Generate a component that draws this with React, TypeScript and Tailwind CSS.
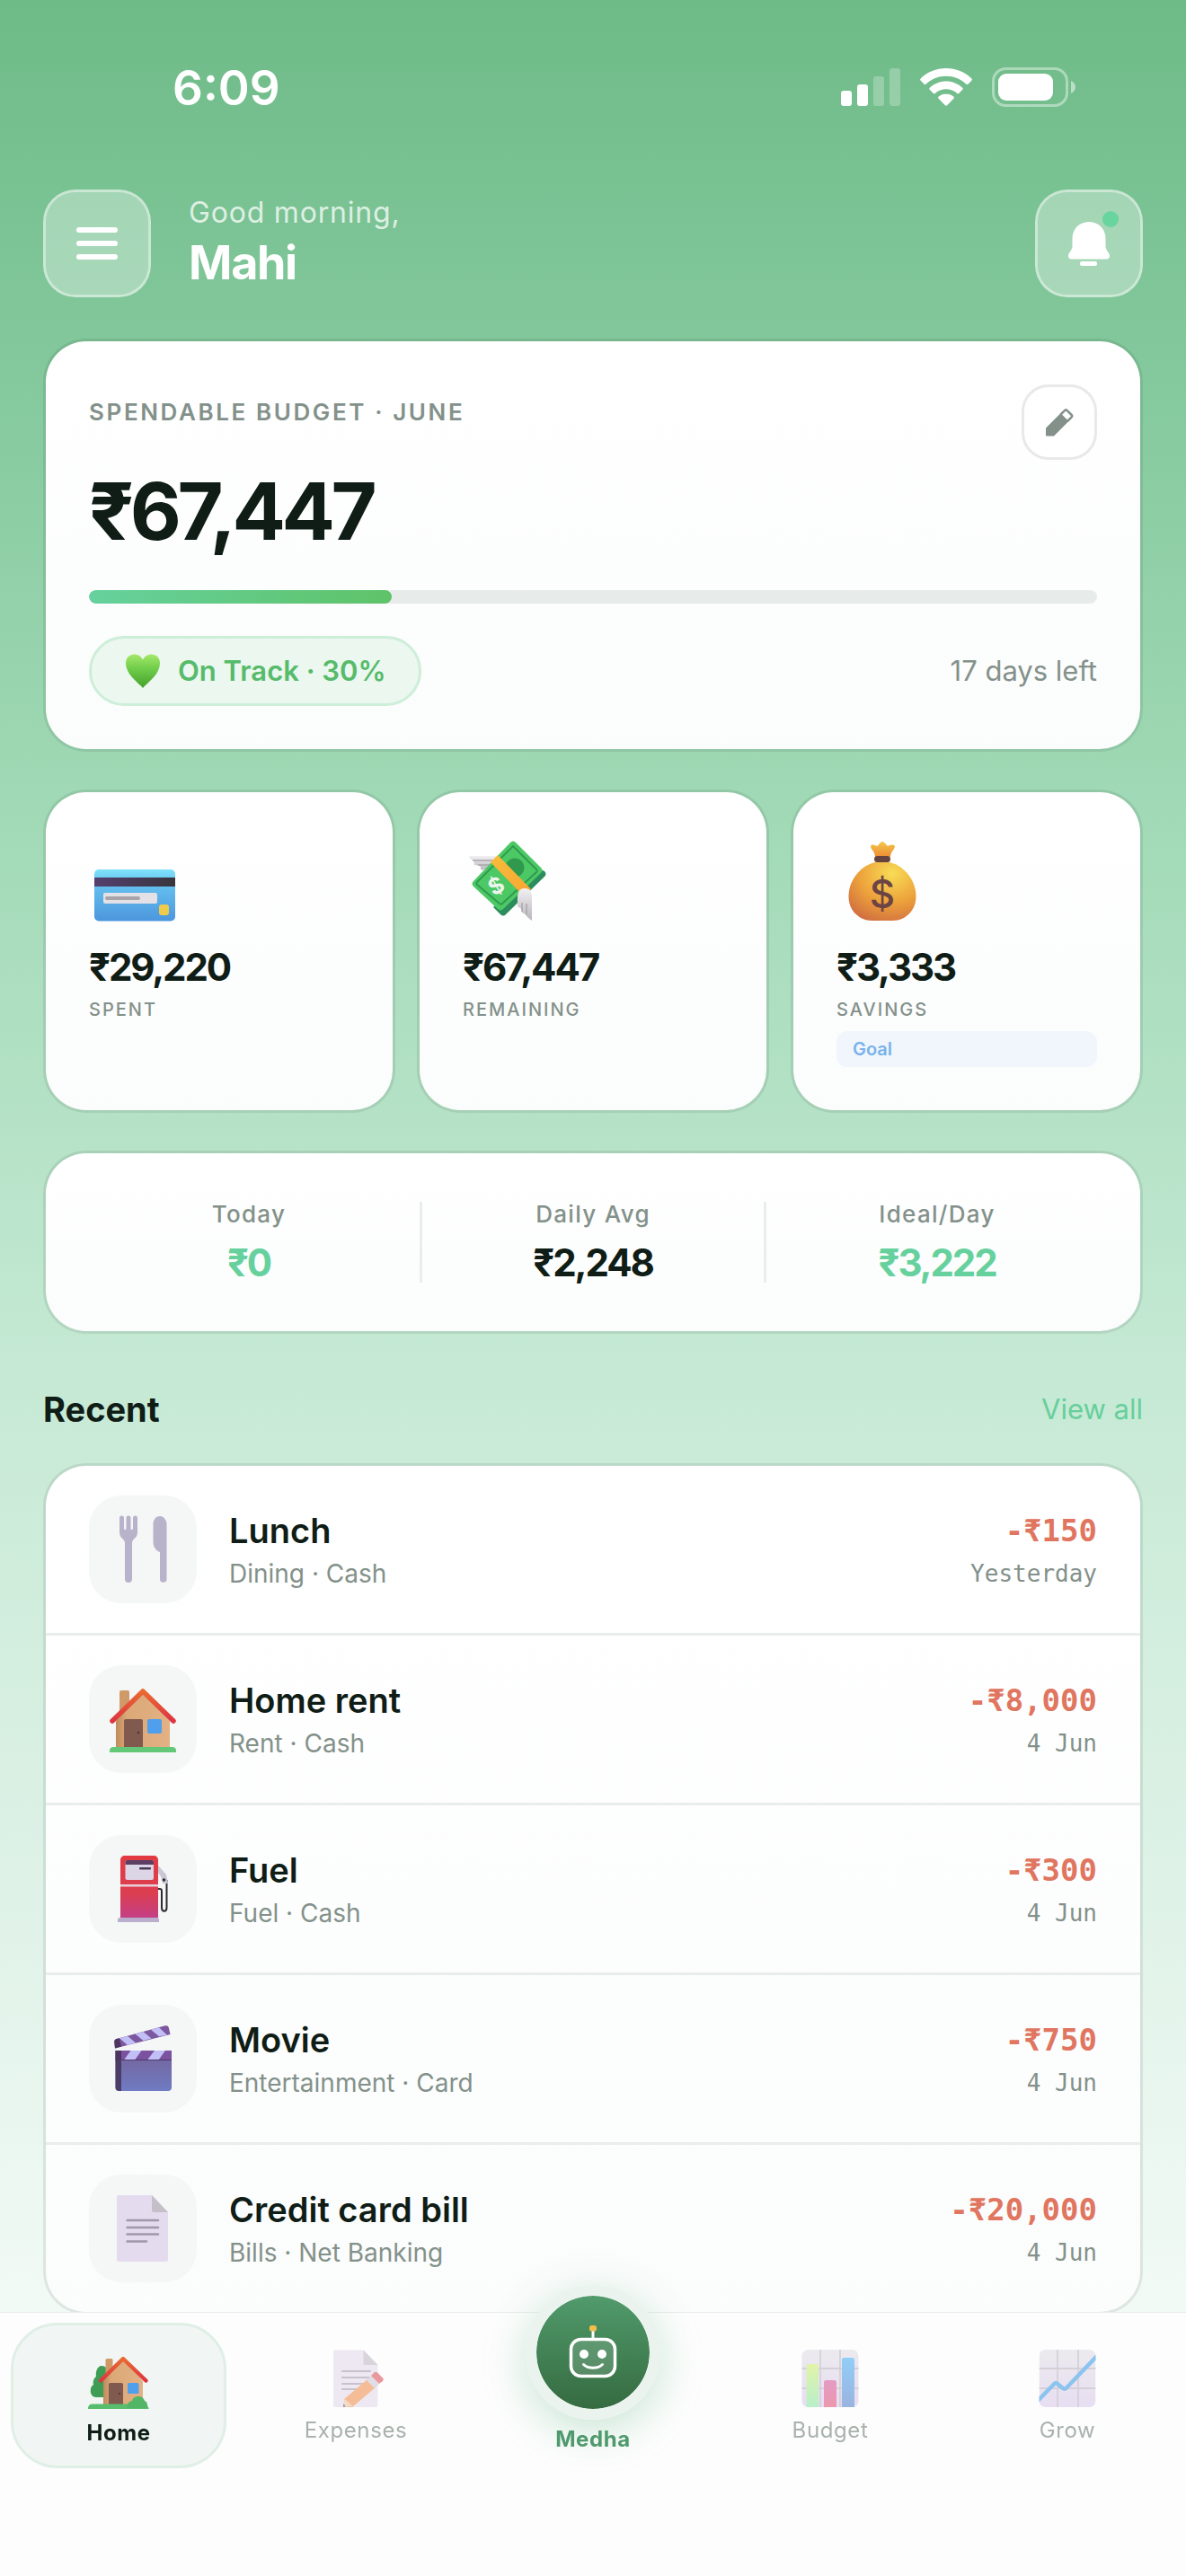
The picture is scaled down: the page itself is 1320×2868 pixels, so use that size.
import React from "react";

const CARD =
  "rounded-[48px] border-[3px] border-black/8 bg-clip-padding bg-linear-to-b from-white to-[#fbfcfc]";

function StatusBar() {
  return (
    <div className="flex items-start justify-between pt-[70px] pr-[122px] pl-[192px]">
      <span className="text-[53px] leading-[56px] font-semibold text-white">6:09</span>
      <div className="flex items-center gap-[22px] pt-[5px]">
        <svg width="66" height="42" viewBox="0 0 66 42" fill="#fff">
          <rect x="0" y="25" width="12" height="17" rx="3" />
          <rect x="18" y="18" width="12" height="24" rx="3" />
          <rect x="36" y="9" width="12" height="33" rx="3" opacity=".25" />
          <rect x="54" y="0" width="12" height="42" rx="3" opacity=".25" />
        </svg>
        <svg width="58" height="42" viewBox="0 0 58 42" fill="#fff">
          <path d="M29 0C18 0 8 4.300.8 11.200c-.9.9-.9 1.800-.1 2.600l3.600 3.600c.8.8 1.700.7 2.500 0C12.800 12 20.500 8.800 29 8.800s16.200 3.200 22.200 8.600c.8.700 1.700.8 2.500 0l3.600-3.600c.8-.8.8-1.700-.1-2.600C50 4.300 40 0 29 0z" />
          <path d="M29 14.500c-7 0-13.300 2.700-18 7-.9.800-.9 1.700-.1 2.500l3.700 3.700c.7.700 1.500.7 2.400 0 3.200-2.800 7.400-4.500 12-4.500s8.800 1.700 12 4.500c.9.700 1.700.7 2.400 0l3.700-3.700c.8-.8.8-1.700-.1-2.500-4.700-4.300-11-7-18-7z" />
          <path d="M29 28.500c-3.200 0-6 1.100-8.200 2.900-.9.700-.9 1.600-.2 2.400l7 7.200c.9.900 1.900.9 2.800 0l7-7.200c.7-.8.7-1.700-.2-2.400-2.200-1.800-5-2.900-8.200-2.900z" />
        </svg>
        <svg width="94" height="44" viewBox="0 0 94 44">
          <rect x="1.500" y="1.500" width="82" height="41" rx="14" fill="none" stroke="#fff" strokeOpacity=".42" strokeWidth="3" />
          <rect x="7" y="7" width="61" height="30" rx="9" fill="#fff" />
          <path d="M88 15c3 1.200 5 4 5 7s-2 5.800-5 7z" fill="#fff" fillOpacity=".5" />
        </svg>
      </div>
    </div>
  );
}

function Header() {
  return (
    <header className="flex items-center justify-between px-12 pt-[84px]">
      <div className="flex items-center gap-[42px]">
        <button
          aria-label="Menu"
          className="flex size-[120px] flex-col items-center justify-center gap-[9px] rounded-[36px] border-[3px] border-white/60 bg-white/32 bg-clip-padding"
        >
          <span className="h-1.5 w-[46px] rounded-full bg-white" />
          <span className="h-1.5 w-[46px] rounded-full bg-white" />
          <span className="h-1.5 w-[46px] rounded-full bg-white" />
        </button>
        <div className="pb-2.5">
          <p className="text-[32px] leading-[54px] tracking-wide text-white/75">Good morning,</p>
          <h1 className="text-[52px] leading-[57px] font-bold tracking-tight text-white">Mahi</h1>
        </div>
      </div>
      <button
        aria-label="Notifications"
        className="flex size-[120px] items-center justify-center rounded-[36px] border-[3px] border-white/60 bg-white/32 bg-clip-padding"
      >
        <svg width="120" height="120" viewBox="0 0 120 120" className="shrink-0">
          <path
            d="M60 36c-11 0-18.500 8-18.500 19v8c0 5-4.500 7-4.500 11 0 2 1 3.500 3.500 3.500h39c2.500 0 3.500-1.500 3.500-3.500 0-4-4.500-6-4.500-11v-8c0-11-7.500-19-18.500-19z"
            fill="#fff"
          />
          <rect x="50" y="80" width="19" height="5" rx="2" fill="#fff" />
          <circle cx="84" cy="33" r="9" fill="#68d49e" />
        </svg>
      </button>
    </header>
  );
}

function BudgetCard() {
  return (
    <section className={`${CARD} p-12`}>
      <div className="flex items-start justify-between">
        <h2 className="pt-3.5 text-[26px] leading-[34px] font-semibold tracking-widest text-[#83918a]">
          SPENDABLE BUDGET · JUNE
        </h2>
        <button
          aria-label="Edit budget"
          className="flex size-[84px] items-center justify-center rounded-[30px] border-[3px] border-[#e9e9e9] bg-white"
        >
          <svg width="32" height="32" viewBox="0 0 32 32">
            <path d="M2 30.500V23L17.500 7.500l7.500 7.500L9.500 30.500z" fill="#83918a" stroke="#83918a" strokeWidth="2" strokeLinejoin="round" />
            <path d="M17.500 7.500l4.700-4.700c.7-.7 1.600-.7 2.300 0l5.200 5.200c.7.700.7 1.600 0 2.300L25 15" fill="none" stroke="#83918a" strokeWidth="2.500" strokeLinejoin="round" />
          </svg>
        </button>
      </div>
      <p className="text-[88px] leading-[115px] font-bold tracking-tighter text-[#0f1d16]">₹67,447</p>
      <div
        role="progressbar"
        aria-label="Budget used"
        aria-valuenow={30}
        className="mt-[30px] h-[15px] overflow-hidden rounded-full bg-[#e7ebe9]"
      >
        <div className="h-full rounded-full bg-linear-to-r from-[#66d19d] to-[#5ec368]" style={{ width: "30%" }} />
      </div>
      <div className="mt-9 flex items-center justify-between">
        <span className="flex h-[78px] items-center gap-[18px] rounded-full border-[3px] border-[#cdeed8] bg-[#ebf7ef] px-9 text-[31px] font-semibold text-[#56bb6a]">
          <svg width="42" height="42" viewBox="0 0 42 42">
            <defs>
              <linearGradient id="heart" x1="0" y1="0" x2="0" y2="1">
                <stop offset="0" stopColor="#a5e86a" />
                <stop offset=".4" stopColor="#72cf4c" />
                <stop offset="1" stopColor="#46a02c" />
              </linearGradient>
            </defs>
            <path d="M21 40C16 34 2 25 2 12.500 2 6 6.500 2.500 11.500 2.500c4.200 0 7.600 2.300 9.500 6 1.900-3.700 5.300-6 9.500-6 5 0 9.500 3.500 9.500 10C40 25 26 34 21 40z" fill="url(#heart)" />
          </svg>
          On Track · 30%
        </span>
        <span className="text-[31px] text-[#83918a]">17 days left</span>
      </div>
    </section>
  );
}

function CreditCardIcon() {
  return (
    <svg width="96" height="108" viewBox="0 0 96 108">
      <defs>
        <linearGradient id="cc" x1="0" y1="0" x2="0" y2="1">
          <stop offset="0" stopColor="#7fe3fa" />
          <stop offset=".25" stopColor="#66c3f0" />
          <stop offset="1" stopColor="#4c96dd" />
        </linearGradient>
        <linearGradient id="ccs">
          <stop offset="0" stopColor="#54406f" />
          <stop offset="1" stopColor="#38353d" />
        </linearGradient>
      </defs>
      <rect x="6" y="38" width="90" height="57.500" rx="5" fill="url(#cc)" />
      <rect x="6" y="47" width="90" height="10" fill="url(#ccs)" />
      <rect x="16" y="64" width="60" height="12" rx="2" fill="#e4e1e6" />
      <rect x="18" y="68" width="39" height="4" rx="2" fill="#a8a5aa" />
      <rect x="78" y="77" width="11" height="12" rx="3" fill="#efcb4b" />
    </svg>
  );
}

function MoneyIcon() {
  return (
    <svg width="96" height="108" viewBox="0 0 96 108">
      <defs>
        <linearGradient id="mw" x1="0" y1="0" x2="0" y2="1">
          <stop offset="0" stopColor="#f2f0f3" />
          <stop offset="1" stopColor="#b9b6bb" />
        </linearGradient>
        <linearGradient id="mb" x1="0" y1="0" x2="1" y2="1">
          <stop offset="0" stopColor="#f7bd3b" />
          <stop offset="1" stopColor="#f9a532" />
        </linearGradient>
      </defs>
      <path d="M7 23h33l-8 12-11 4-2-5-6-1-1-5-4-2z" fill="url(#mw)" />
      <path d="M11 28h22M17 33h16" stroke="#aaa7ad" strokeWidth="1.500" />
      <path d="M83 36l8 4c2 2 2 4 0 6L48 88c-2 2-4 2-6 0l-8-8z" fill="#2c8d5c" />
      <path d="M53 8c2-2 4-2 6 0l28 28c2 2 2 4 0 6L45 82c-2 2-4 2-6 0L12 57c-2-2-2-4 0-6z" fill="#4cc864" />
      <path d="M56 12l26 26c1 1 1 2 0 3L44 76c-1 1-2 1-3 0L16 55c-1-1-1-2 0-3z" fill="none" stroke="#2f9a50" strokeWidth="1.800" />
      <circle cx="58" cy="36" r="10.500" fill="#30994e" />
      <text x="37" y="65" textAnchor="middle" fontSize="25" fontWeight="700" fill="#eef5ef" transform="rotate(-30 37 56)">
        $
      </text>
      <path d="M31 30l8-8 37 38-8 8z" fill="url(#mb)" />
      <path d="M61 71c0-8 2-12 8-12s8 4 8 10v26l-5-4-2-3-4-2-1-4-4-3z" fill="url(#mw)" />
      <path d="M66 75v10M71 76v13" stroke="#aaa7ad" strokeWidth="1.500" />
    </svg>
  );
}

function MoneyBagIcon() {
  return (
    <svg width="96" height="108" viewBox="0 0 96 108">
      <defs>
        <radialGradient id="bag" cx=".65" cy=".2" r=".9">
          <stop offset="0" stopColor="#f8dc55" />
          <stop offset=".55" stopColor="#eda23b" />
          <stop offset="1" stopColor="#cf6c40" />
        </radialGradient>
        <linearGradient id="bagTop" x1="0" y1="0" x2="0" y2="1">
          <stop offset="0" stopColor="#f3c949" />
          <stop offset="1" stopColor="#ee8b35" />
        </linearGradient>
      </defs>
      <path d="M43 24c0-6-5-8-5-12 1-2 3-2 7 0 3-2 4-5 6-5s4 3 6 5c4-2 7-2 8 0 0 4-5 6-5 12z" fill="url(#bagTop)" />
      <path d="M51 29c20 0 37.500 18 37.500 39 0 17-13 27-26 27h-23c-13 0-26-10-26-27C13.500 47 31 29 51 29z" fill="url(#bag)" />
      <rect x="42" y="23" width="18" height="7" rx="3.500" fill="#66433f" />
      <text x="51" y="81" textAnchor="middle" fontSize="44" fontWeight="500" fill="#6d4444">
        $
      </text>
    </svg>
  );
}

function Stat({ icon, amount, label, badge }: { icon: React.ReactNode; amount: string; label: string; badge?: string }) {
  return (
    <section className={`${CARD} p-12`}>
      {icon}
      <p className="mt-3 text-[42px] leading-[54px] font-bold tracking-tighter text-[#0f1d16]">{amount}</p>
      <h3 className="mt-[7px] text-[20px] leading-[27px] font-medium tracking-widest text-[#83918a]">{label}</h3>
      {badge && (
        <p className="mt-2.5 rounded-xl bg-[#f0f6fc] px-[18px] text-[20px] leading-[40px] font-semibold text-[#7ab2ec]">{badge}</p>
      )}
    </section>
  );
}

function Average({ label, value, green }: { label: string; value: string; green?: boolean }) {
  return (
    <div className="flex-1 text-center">
      <h3 className="text-[26px] leading-[27px] font-medium tracking-wider text-[#83918a]">{label}</h3>
      <p
        className={
          green
            ? "mt-[18px] text-[42px] leading-[45px] font-bold tracking-tighter text-[#66d19d]"
            : "mt-[18px] text-[42px] leading-[45px] font-bold tracking-tighter text-[#0f1d16]"
        }
      >
        {value}
      </p>
    </div>
  );
}

function CutleryIcon() {
  return (
    <svg width="120" height="120" viewBox="0 0 120 120">
      <path d="M34 25a2.500 2.500 0 015 0v12c0 1.500 2.500 1.500 2.500 0V25a2.500 2.500 0 015 0v12c0 1.500 2.500 1.500 2.500 0V25a2.500 2.500 0 015 0v16c0 7-6 7-6 12v40a4 4 0 01-8 0V53c0-5-6-5-6-12z" fill="#b9b2cb" />
      <path d="M79 23c4 0 7.500 4 7.500 9v61a3.700 3.700 0 01-7.500 0V63c-5-2-7.500-6-7.500-12V32c0-5 3-9 7.500-9z" fill="#b9b2cb" />
    </svg>
  );
}

function HouseIcon() {
  return (
    <svg width="120" height="120" viewBox="0 0 120 120">
      <defs>
        <linearGradient id="wall">
          <stop offset="0" stopColor="#c08a5c" />
          <stop offset=".2" stopColor="#dba877" />
          <stop offset="1" stopColor="#e3b184" />
        </linearGradient>
        <linearGradient id="roof" x1="0" y1="0" x2="0" y2="1">
          <stop offset="0" stopColor="#ea6a33" />
          <stop offset="1" stopColor="#dd3540" />
        </linearGradient>
      </defs>
      <rect x="34" y="28" width="11" height="30" rx="2" fill="#cf9a68" />
      <path d="M60 30l30 32v30H30V62z" fill="url(#wall)" />
      <path d="M26 62L60 29l34 33" fill="none" stroke="url(#roof)" strokeWidth="5.500" strokeLinecap="round" strokeLinejoin="round" />
      <path d="M39 62a2 2 0 012-2h17a2 2 0 012 2v29H39z" fill="#80594f" />
      <circle cx="55" cy="75" r="1.200" fill="#4f342f" />
      <rect x="65" y="60" width="16" height="16" rx="2" fill="#4f9fec" />
      <path d="M23 97v-2c0-2.500 2-4 4-4h66c2 0 4 1.500 4 4v2z" fill="#62c878" />
    </svg>
  );
}

function FuelIcon() {
  return (
    <svg width="120" height="120" viewBox="0 0 120 120">
      <defs>
        <linearGradient id="pump" x1="0" y1="0" x2="0" y2="1">
          <stop offset="0" stopColor="#e23a42" />
          <stop offset=".6" stopColor="#dc3e50" />
          <stop offset="1" stopColor="#c33f86" />
        </linearGradient>
      </defs>
      <path d="M77 60h2c2 0 2 1 2 4v17c0 5 5.500 5 5.500 0V50" fill="none" stroke="#2f2b31" strokeWidth="2" />
      <path d="M77 34l9 10 2 10h-6l-2-8-3-4z" fill="#cdc6d6" />
      <circle cx="83.500" cy="50" r="1.800" fill="#2f2b31" />
      <path d="M35 92V28c0-3 2-5 5-5h32c3 0 5 2 5 5v64z" fill="url(#pump)" />
      <rect x="40.500" y="28" width="31.500" height="22" rx="2" fill="#dcd5e6" />
      <path d="M40.500 30a2 2 0 012-2H70a2 2 0 012 2v3H40.500z" fill="#5c3f63" />
      <rect x="56" y="36" width="13" height="2.500" rx="1" fill="#4a3a56" />
      <rect x="35" y="55" width="42" height="2.500" fill="#e9cfdc" />
      <path d="M32 97v-2.500c0-1.500 1-2.500 2.500-2.500h41c1.500 0 2.500 1 2.500 2.500V97z" fill="#b9afcc" />
    </svg>
  );
}

function MovieIcon() {
  return (
    <svg width="120" height="120" viewBox="0 0 120 120">
      <defs>
        <linearGradient id="clap" x1="0" y1="0" x2="0" y2="1">
          <stop offset="0" stopColor="#75639a" />
          <stop offset="1" stopColor="#6f7bc2" />
        </linearGradient>
      </defs>
      <path d="M29 48.500l-.7-7c-.2-2 .7-3 2.500-3.500l54-14.700c2-.5 3.500.3 4 2.200l1.700 7.500z" fill="#7b58a0" />
      <path d="M34 37.200l9-2.400 9 7.600-9 2.500zM51.500 32.500l9-2.400 9 7.500-9 2.500zM69 27.700l9-2.400 9 8.400-9 1.500z" fill="#c2bff6" />
      <path d="M29 48.500l-.7-7c-.2-2 .7-3 2.500-3.500l3-.8 2.200 9.300z" fill="#4f3560" />
      <path d="M29.500 51H92v41c0 2.500-1.500 4-4 4H33.500c-2.500 0-4-1.500-4-4z" fill="url(#clap)" />
      <rect x="29.500" y="51" width="62.500" height="10.500" fill="#7b52a0" />
      <path d="M46.500 51h12L51 61.500H39zM73 51h12l-7.500 10.500H65z" fill="#c2bff6" />
      <path d="M29.500 51H36v45h-2.500c-2.500 0-4-1.500-4-4z" fill="#3d2c4d" fillOpacity=".75" />
      <path d="M29.500 61.500H92" stroke="#4b3a68" strokeWidth="1" />
    </svg>
  );
}

function DocumentIcon() {
  return (
    <svg width="120" height="120" viewBox="0 0 120 120">
      <path d="M33 23h37l18 19v53c0 1-1 2-2 2H33c-1 0-2-1-2-2V25c0-1 1-2 2-2z" fill="#e4dcee" />
      <path d="M70 23l18 19H72c-1 0-2-1-2-2z" fill="#c5bfca" />
      <path d="M42.500 51H77M42.500 59H77M42.500 66.500H77M42.500 74.500H64" stroke="#a098aa" strokeWidth="2.500" strokeLinecap="round" />
    </svg>
  );
}

const TRANSACTIONS = [
  { icon: <CutleryIcon />, title: "Lunch", meta: "Dining · Cash", amount: "-₹150", date: "Yesterday" },
  { icon: <HouseIcon />, title: "Home rent", meta: "Rent · Cash", amount: "-₹8,000", date: "4 Jun" },
  { icon: <FuelIcon />, title: "Fuel", meta: "Fuel · Cash", amount: "-₹300", date: "4 Jun" },
  { icon: <MovieIcon />, title: "Movie", meta: "Entertainment · Card", amount: "-₹750", date: "4 Jun" },
  { icon: <DocumentIcon />, title: "Credit card bill", meta: "Bills · Net Banking", amount: "-₹20,000", date: "4 Jun" },
];

function RecentList() {
  return (
    <ul className={`${CARD} divide-y-[3px] divide-[#e9edeb]`}>
      {TRANSACTIONS.map((t) => (
        <li key={t.title} className="flex items-center gap-9 px-12 py-[33px]">
          <span className="size-[120px] shrink-0 rounded-[36px] bg-[#f5f6f6]">{t.icon}</span>
          <div className="flex-1">
            <p className="text-[38px] leading-[54px] font-semibold text-[#0f1d16]">{t.title}</p>
            <p className="text-[28px] leading-[42px] text-[#83918a]">{t.meta}</p>
          </div>
          <div className="text-right font-['DejaVu_Sans_Mono',monospace]">
            <p className="text-[34px] leading-[54px] font-bold text-[#e07560]">{t.amount}</p>
            <p className="text-[26px] leading-[42px] text-[#83918a]">{t.date}</p>
          </div>
        </li>
      ))}
    </ul>
  );
}

function HomeTabIcon() {
  return (
    <svg width="72" height="72" viewBox="0 0 72 72">
      <path d="M17 18c6 0 8 6 7 10l2 25H11c-5 0-7-5-6-9 0-3 2-4 3-5-1-4 1-8 3-9-1-6 2-12 6-12z" fill="#3f9c54" />
      <rect x="21.500" y="10" width="8" height="26" rx="1.500" fill="#cf9a68" />
      <path d="M41 10l22 25v27H19V35z" fill="url(#wall)" />
      <path d="M16 34.500L41 10l25.500 24.500" fill="none" stroke="url(#roof)" strokeWidth="4.500" strokeLinecap="round" strokeLinejoin="round" />
      <path d="M25 39a2 2 0 012-2h12a2 2 0 012 2v22H25z" fill="#80594f" />
      <circle cx="37" cy="49" r="1" fill="#4f342f" />
      <rect x="46" y="37" width="12.500" height="12" rx="1.500" fill="#4f9fec" />
      <path d="M2 66v-1c0-2.500 2-4.500 5-4.500h56c4 0 6.500 2.500 6.500 5.500z" fill="#58bd6c" />
      <path d="M46 65c-1-5 2-8 5-8 1-4 4-5 7-5 4 0 6 2 7 5 3 1 4 5 2 8z" fill="#53b566" />
    </svg>
  );
}

function ExpensesTabIcon() {
  return (
    <svg width="72" height="72" viewBox="0 0 72 72" opacity=".55">
      <path d="M13 3.500h31.500L60.500 20v45c0 1-1 2-2 2H13c-1 0-2-1-2-2V5.500c0-1 1-2 2-2z" fill="#e0d8ea" />
      <path d="M44.500 3.500l16 16.500H46c-1 0-1.500-.5-1.500-1.500z" fill="#bab3c2" />
      <path d="M21 27h31M21 34h31M21 41h24M21 47h18" stroke="#9b93a5" strokeWidth="2.200" strokeLinecap="round" />
      <path d="M23 58l26-22 9 9-26 22h-9z" fill="#f08a45" />
      <path d="M23.500 57.500l9 8.500-10.500 1z" fill="#e8c09a" />
      <path d="M22.500 63l2 3.500-2.500.5z" fill="#40304f" />
      <path d="M48 37l5-5 9 9-5 5z" fill="#c9c3d2" />
      <path d="M53 32l3.500-3.500c1-1 2.500-1 3.500 0l6 6c1 1 1 2.500 0 3.500L62 41z" fill="#dc4652" />
    </svg>
  );
}

function BudgetTabIcon() {
  return (
    <svg width="72" height="72" viewBox="0 0 72 72" opacity=".55">
      <defs>
        <linearGradient id="b1" x1="0" y1="0" x2="0" y2="1">
          <stop offset="0" stopColor="#cdec66" />
          <stop offset="1" stopColor="#7fe6a0" />
        </linearGradient>
        <linearGradient id="b2" x1="0" y1="0" x2="0" y2="1">
          <stop offset="0" stopColor="#cf4c96" />
          <stop offset="1" stopColor="#e0466f" />
        </linearGradient>
        <linearGradient id="b3" x1="0" y1="0" x2="0" y2="1">
          <stop offset="0" stopColor="#3aa8f4" />
          <stop offset="1" stopColor="#4a78c8" />
        </linearGradient>
        <linearGradient id="sheet" x1="0" y1="0" x2="0" y2="1">
          <stop offset="0" stopColor="#dedbe2" />
          <stop offset="1" stopColor="#d6c6ea" />
        </linearGradient>
      </defs>
      <rect x="4.500" y="3" width="63" height="64" rx="7" fill="url(#sheet)" />
      <path d="M25 3v64M47 3v64M4.500 24h63M4.500 46h63" stroke="#b3adbb" strokeWidth="1.800" />
      <path d="M9.500 67V21c0-1 1-2 2-2h9.500c1 0 2 1 2 2v46z" fill="url(#b1)" />
      <path d="M29 67V39c0-1 1-2 2-2h10c1 0 2 1 2 2v28z" fill="url(#b2)" />
      <path d="M49 67V14c0-1 1-2 2-2h10c1 0 2 1 2 2v53z" fill="url(#b3)" />
    </svg>
  );
}

function GrowTabIcon() {
  return (
    <svg width="72" height="72" viewBox="0 0 72 72" opacity=".55">
      <defs>
        <clipPath id="growSheet">
          <rect x="4.500" y="3" width="63" height="64" rx="7" />
        </clipPath>
      </defs>
      <g clipPath="url(#growSheet)">
        <rect x="4.500" y="3" width="63" height="64" fill="url(#sheet)" />
        <path d="M25 3v64M48 3v64M4.500 24h63M4.500 46h63" stroke="#b3adbb" strokeWidth="1.800" />
        <path d="M3 60l18.500-19c1-1 2.500-1 3.500 0l6 5c1 1 2.500 1 3.500 0L70 9" fill="none" stroke="#2f96e4" strokeWidth="4.500" strokeLinejoin="round" />
      </g>
    </svg>
  );
}

function Tab({ icon, label, active }: { icon: React.ReactNode; label: string; active?: boolean }) {
  return (
    <button
      aria-current={active ? "page" : undefined}
      className={
        active
          ? "mx-3 flex h-[162px] flex-col items-center rounded-[52px] border-[3px] border-[#dfefe6] bg-[#f1f6f4] pt-[27px] font-bold text-[#0f1d16]"
          : "mx-3 flex h-[162px] flex-col items-center pt-[27px] text-[#a9b2ad]"
      }
    >
      {icon}
      <span className="mt-[3px] text-[24px] leading-[36px] tracking-wide">{label}</span>
    </button>
  );
}

function MedhaTab() {
  return (
    <button className="mx-3 flex flex-col items-center text-[#4f9a6c]">
      <span className="-mt-[42px] flex size-[150px] items-center justify-center rounded-full border-[12px] border-[#ebf3ee] bg-linear-to-b from-[#519b6c] to-[#356b40] bg-clip-padding shadow-[0_12px_48px_rgba(80,175,120,0.3)]">
        <svg width="54" height="60" viewBox="0 0 54 60">
          <path d="M27 6v9" stroke="#fff" strokeWidth="3" />
          <rect x="23" y="0" width="8" height="6.500" rx="2.500" fill="#f4bd4c" />
          <rect x="2.500" y="15.500" width="49" height="41" rx="11" fill="#fff" fillOpacity=".14" stroke="#fff" strokeWidth="3.500" />
          <circle cx="17" cy="32" r="5" fill="#fff" />
          <circle cx="37" cy="32" r="5" fill="#fff" />
          <path d="M16.500 43.500c5 5 16 5 21 0" fill="none" stroke="#fff" strokeWidth="3" strokeLinecap="round" />
        </svg>
      </span>
      <span className="mt-1 text-[24px] leading-[36px] font-bold tracking-wide">Medha</span>
    </button>
  );
}

export default function App() {
  return (
    <div className="min-h-screen bg-[linear-gradient(180deg,#6ebb87_0%,#83c89c_14%,#a0d9b5_31%,#c5e9d4_53%,#dcf1e5_71%,#f2faf6_90%)] font-[Inter,'Noto_Sans',sans-serif]">
      <StatusBar />
      <Header />
      <main className="flex flex-col gap-[42px] px-12 pt-[46px] pb-[280px]">
        <BudgetCard />
        <div className="grid grid-cols-3 gap-6">
          <Stat icon={<CreditCardIcon />} amount="₹29,220" label="SPENT" />
          <Stat icon={<MoneyIcon />} amount="₹67,447" label="REMAINING" />
          <Stat icon={<MoneyBagIcon />} amount="₹3,333" label="SAVINGS" badge="Goal" />
        </div>
        <section className={`${CARD} flex divide-x-[3px] divide-[#e9edeb] px-9 py-[54px]`}>
          <Average label="Today" value="₹0" green />
          <Average label="Daily Avg" value="₹2,248" />
          <Average label="Ideal/Day" value="₹3,222" green />
        </section>
        <section className="pt-[18px]">
          <div className="mb-9 flex items-center justify-between">
            <h2 className="text-[38px] leading-[48px] font-bold text-[#0f1d16]">Recent</h2>
            <a href="#all" className="text-[31px] leading-[48px] text-[#66cf9b]">
              View all
            </a>
          </div>
          <RecentList />
        </section>
      </main>
      <nav className="fixed inset-x-0 bottom-0 grid h-[294px] grid-cols-5 items-start border-t border-[#e8edea] bg-[#fdfdfd] pt-[11px]">
        <Tab icon={<HomeTabIcon />} label="Home" active />
        <Tab icon={<ExpensesTabIcon />} label="Expenses" />
        <MedhaTab />
        <Tab icon={<BudgetTabIcon />} label="Budget" />
        <Tab icon={<GrowTabIcon />} label="Grow" />
      </nav>
    </div>
  );
}
